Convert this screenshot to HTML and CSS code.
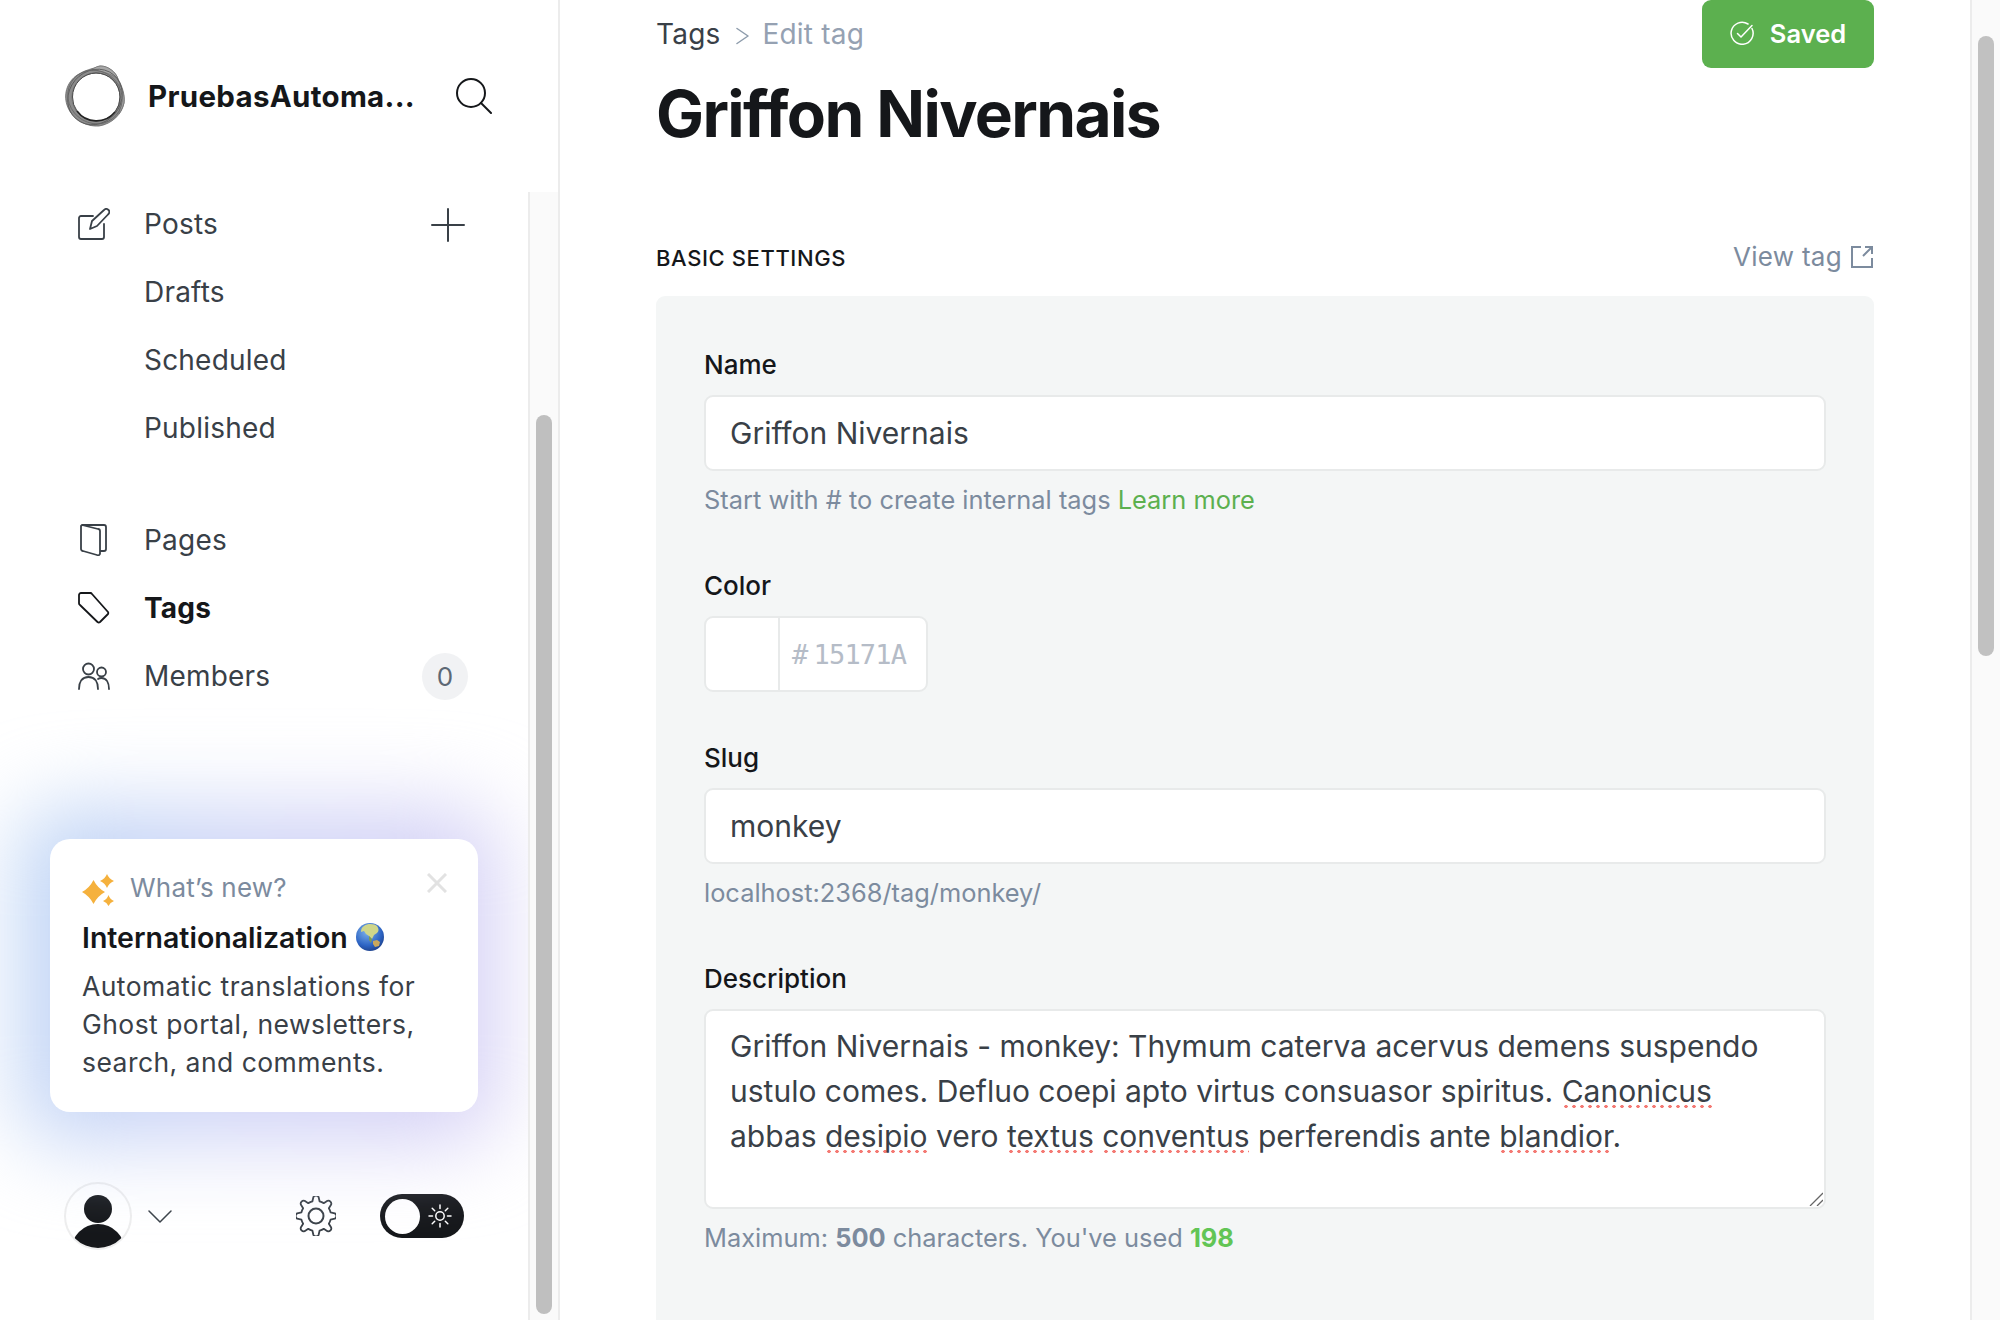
FILE: index.html
```html
<!DOCTYPE html>
<html lang="en">
<head>
<meta charset="utf-8">
<title>Griffon Nivernais - Edit tag</title>
<link rel="stylesheet" href="styles.css">
</head>
<body>
<div class="app">
  <aside class="sidebar">
    <header class="brand">
      <svg class="logo" viewBox="0 0 60 60" fill="none">
        <path fill-rule="evenodd" fill="#8c8c8c" stroke="#666" stroke-width=".8" d="M35 0C43 0 51 6 53 13C57 20 60 28 59 37C57 48 47 58 34 60C20 61 6 52 2 39C-2 27 3 14 14 8C20 4 27 3 35 0ZM7 31a24 24 0 1 0 48 0a24 24 0 1 0-48 0Z"/>
        <path fill="#a8a8a8" stroke="#777" stroke-width=".8" d="M27 4C30 1 33 0 36 0C43 0 51 6 53 13C50 10 40 5 27 4Z"/>
        <path fill="#a0a0a0" stroke="#777" stroke-width=".8" d="M54 18C57 23 60 29 59 37C58 41 56 45 54 48C56 38 56 28 54 18Z"/>
        <path d="M12 45A24 24 0 0 0 50 46" stroke="#222" stroke-width="1.600"/>
        <path d="M12 45A24 24 0 0 1 7.500 31A24 24 0 0 1 31 7A24 24 0 0 1 55 31A24 24 0 0 1 50 46" stroke="#4a4a4a" stroke-width="1"/>
        <ellipse cx="30" cy="31" rx="26" ry="29" stroke="#555" stroke-width=".8" transform="rotate(40 30 31)"/>
        <ellipse cx="30" cy="31" rx="26" ry="28" stroke="#666" stroke-width=".8" transform="rotate(-50 30 31)"/>
      </svg>
      <span class="brand-name">PruebasAutoma...</span>
      <svg class="search" viewBox="0 0 36 36" fill="none" stroke="#15171a" stroke-width="2" stroke-linecap="round"><circle cx="15" cy="15" r="14"/><path d="M25 25l10 10"/></svg>
    </header>
    <div class="side-body">
      <div class="side-col">
        <nav class="nav">
          <div class="nav-group">
            <a class="nav-row">
              <svg class="nav-icon" viewBox="0 0 32 32" fill="none" stroke="#394047" stroke-width="1.8" stroke-linecap="round" stroke-linejoin="round"><path d="M15 8H3a2 2 0 0 0-2 2v19a2 2 0 0 0 2 2h21a2 2 0 0 0 2-2V16"/><path d="M12 21l2-8L26 2c1.500-1.500 3-1.500 4.500 0s1 3-.5 4.500L19 18z"/></svg>
              <span>Posts</span>
              <svg class="plus" viewBox="0 0 34 34" fill="none" stroke="#394047" stroke-width="2" stroke-linecap="round"><path d="M17 1v32M1 17h32"/></svg>
            </a>
            <a class="nav-row sub">Drafts</a>
            <a class="nav-row sub">Scheduled</a>
            <a class="nav-row sub">Published</a>
          </div>
          <div class="nav-group">
            <a class="nav-row">
              <svg class="nav-icon" viewBox="0 0 32 32" fill="none" stroke="#394047" stroke-width="1.8" stroke-linejoin="round"><path d="M4 1h22a2 2 0 0 1 2 2v22a2 2 0 0 1-2 2h-4"/><path d="M4 1l16 4a2 2 0 0 1 2 2v22a2 2 0 0 1-3 2L5 27a2 2 0 0 1-2-2V2z"/></svg>
              <span>Pages</span>
            </a>
            <a class="nav-row active">
              <svg class="nav-icon" viewBox="0 0 32 32" fill="none" stroke="#15171a" stroke-width="1.8" stroke-linejoin="round"><path d="M3 1h9a2 2 0 0 1 2 1l16 18a2 2 0 0 1 0 2l-8 8a2 2 0 0 1-2.500 0L2 13a2 2 0 0 1-1-2V3a2 2 0 0 1 2-2z"/></svg>
              <span>Tags</span>
            </a>
            <a class="nav-row">
              <svg class="nav-icon" viewBox="0 0 32 32" fill="none" stroke="#394047" stroke-width="1.8" stroke-linecap="round"><circle cx="10.500" cy="9" r="5.500"/><circle cx="23.500" cy="12" r="4.500"/><path d="M1 29c0-7 3-12 9.500-12S20 22 20 29"/><path d="M20 19c1-.7 2.300-1 3.500-1 5 0 7.500 5 7.500 11"/></svg>
              <span>Members</span>
              <span class="badge">0</span>
            </a>
          </div>
        </nav>
        <section class="news">
          <svg class="news-close" viewBox="0 0 20 20" fill="none" stroke="#e2e2e2" stroke-width="3"><path d="M1 1l18 18M19 1L1 19"/></svg>
          <div class="news-kicker">
            <svg class="sparkle" viewBox="0 0 32 32" fill="#f5b13d"><path d="M11.500 6Q15.500 14 23 18 15.500 22 11.500 30 7.500 22 0 18 7.500 14 11.500 6Z"/><path d="M25 0Q27 5 32 7 27 9 25 14 23 9 18 7 23 5 25 0Z"/><path d="M26.500 21Q28 25.500 32 27 28 28.500 26.500 32 25 28.500 21 27 25 25.500 26.500 21Z"/></svg>
            <span>What’s new?</span>
          </div>
          <h3 class="news-title">Internationalization
            <svg class="globe" viewBox="0 0 28 28"><defs><radialGradient id="sea" cx=".4" cy=".3" r=".85"><stop offset="0" stop-color="#7fb4ec"/><stop offset=".6" stop-color="#2d64c4"/><stop offset="1" stop-color="#16306f"/></radialGradient></defs><circle cx="14" cy="14" r="14" fill="url(#sea)"/><path d="M8 3c4-3 11-2 13 0 2 3 2 5 0 7l-3 2-2 4-3-3-3-2-2-3-3 1c0-3 1-5 3-6z" fill="#cfd68a"/><path d="M17 18l4-1 3 2-1 4-4 1-2-3z" fill="#c9a85c"/><path d="M13 13l3 3-1 4-2-3z" fill="#7c9c55"/></svg>
          </h3>
          <p class="news-text">Automatic translations for Ghost portal, newsletters, search, and comments.</p>
        </section>
        <footer class="side-foot">
          <div class="avatar">
            <svg viewBox="0 0 64 64"><circle cx="32" cy="25" r="14" fill="#15171a"/><circle cx="32" cy="67" r="27" fill="#15171a"/></svg>
          </div>
          <svg class="chev" viewBox="0 0 24 14" fill="none" stroke="#394047" stroke-width="1.500" stroke-linecap="round" stroke-linejoin="round"><path d="M1 1l11 11L23 1"/></svg>
          <svg class="gear" viewBox="0 0 40 40" fill="none" stroke="#394047" stroke-width="1.800" stroke-linejoin="round"><path d="M16.370 5.450L17.360 1.180A3 3 0 0 1 22.640 1.180L23.630 5.450A15 15 0 0 1 27.730 7.140L31.430 4.820A3 3 0 0 1 35.180 8.570L32.860 12.270A15 15 0 0 1 34.550 16.370L38.820 17.360A3 3 0 0 1 38.820 22.640L34.550 23.630A15 15 0 0 1 32.860 27.730L35.180 31.430A3 3 0 0 1 31.430 35.180L27.730 32.860A15 15 0 0 1 23.630 34.550L22.640 38.820A3 3 0 0 1 17.360 38.820L16.370 34.550A15 15 0 0 1 12.270 32.860L8.570 35.180A3 3 0 0 1 4.820 31.430L7.140 27.730A15 15 0 0 1 5.450 23.630L1.180 22.640A3 3 0 0 1 1.180 17.360L5.450 16.370A15 15 0 0 1 7.140 12.270L4.820 8.570A3 3 0 0 1 8.570 4.820L12.270 7.140A15 15 0 0 1 16.370 5.450Z"/><circle cx="20" cy="20" r="7.500" stroke-width="2"/></svg>
          <div class="toggle">
            <span class="knob"></span>
            <svg class="sun" viewBox="0 0 24 24" fill="none" stroke="#fff" stroke-width="1.500" stroke-linecap="round"><circle cx="12" cy="12" r="4.200"/><path d="M12 1v3.500M12 19.500V23M1 12h3.500M19.500 12H23M4.200 4.200l2.500 2.500M17.300 17.300l2.500 2.500M4.200 19.800l2.500-2.500M17.300 6.700l2.500-2.500"/></svg>
          </div>
        </footer>
      </div>
      <div class="side-track"><div class="side-thumb"></div></div>
    </div>
  </aside>

  <main class="main">
    <div class="topbar">
      <div class="crumbs">
        <a class="crumb-link">Tags</a>
        <svg class="crumb-sep" viewBox="0 0 13 18" fill="none" stroke="#8e9cac" stroke-width="1.500" stroke-linecap="round" stroke-linejoin="round"><path d="M1 1.500l11 7.500-11 7.500"/></svg>
        <span class="crumb-here">Edit tag</span>
      </div>
      <button class="saved" type="button">
        <svg viewBox="0 0 24 24" fill="none" stroke="#fff" stroke-width="1.500" stroke-linecap="round" stroke-linejoin="round"><path d="M22 7.500A11 11 0 1 1 18 3"/><path d="M7.500 12.500l3.500 3.500 11-11.500"/></svg>
        Saved
      </button>
    </div>
    <h1 class="title">Griffon Nivernais</h1>
    <div class="section-head">
      <h2>BASIC SETTINGS</h2>
      <a class="view-tag">View tag
        <svg viewBox="0 0 22 22" fill="none" stroke="#7c8b9e" stroke-width="2"><path d="M10 1H1v20h20v-9"/><path d="M12 10l9-9M14 1h7v7"/></svg>
      </a>
    </div>
    <form class="panel">
      <div class="field field-name">
        <label>Name</label>
        <div class="input">Griffon Nivernais</div>
        <p class="hint">Start with # to create internal tags <a class="green">Learn more</a></p>
      </div>
      <div class="field field-color">
        <label>Color</label>
        <div class="color">
          <span class="swatch"></span>
          <span class="hex"><span class="hash">#</span>15171A</span>
        </div>
      </div>
      <div class="field field-slug">
        <label>Slug</label>
        <div class="input">monkey</div>
        <p class="hint">localhost:2368/tag/monkey/</p>
      </div>
      <div class="field field-desc">
        <label>Description</label>
        <div class="textarea">Griffon Nivernais - monkey: Thymum caterva acervus demens suspendo ustulo comes. Defluo coepi apto virtus consuasor spiritus. <span class="spell">Canonicus</span> abbas <span class="spell">desipio</span> vero <span class="spell">textus</span> <span class="spell">conventus</span> perferendis ante <span class="spell">blandior</span>.
          <svg class="grip" viewBox="0 0 14 14" fill="none" stroke="#666" stroke-width="1.300"><path d="M1 14L14 1M8 14l6-6"/></svg>
        </div>
        <p class="hint">Maximum: <b>500</b> characters. You've used <b class="green">198</b></p>
      </div>
    </form>
  </main>

  <div class="page-track"><div class="page-thumb"></div></div>
</div>
</body>
</html>
```
FILE: styles.css
```css
* { box-sizing: border-box; }
html, body { margin: 0; height: 100%; overflow: hidden; background: #fff; }
body { font-family: Inter, "Liberation Sans", sans-serif; color: #15171a; }
h1, h2, h3, p { margin: 0; }

.app { display: flex; width: 2000px; height: 1320px; overflow: hidden; }

/* Sidebar */
.sidebar { flex: 0 0 560px; height: 1320px; border-right: 2px solid #ececec; display: flex; flex-direction: column; }
.brand { flex: 0 0 190px; display: flex; align-items: center; padding-left: 65px; }
.logo { width: 60px; height: 60px; flex: none; margin-top: 1px; overflow: visible; }
.brand-name { margin-left: 23px; width: 308px; font-size: 29.500px; font-weight: 700; letter-spacing: .3px; white-space: nowrap; margin-top: 2px; }
.search { width: 36px; height: 36px; flex: none; margin-top: 1px; }

.side-body { flex: 1; display: flex; min-height: 0; }
.side-col { flex: 1; min-width: 0; overflow: hidden; display: flex; flex-direction: column; }
.side-track { flex: 0 0 30px; margin-top: 2px; background: #fafafa; border-left: 2px solid #ececec; padding: 223px 0 6px 6px; }
.side-thumb { width: 16px; height: 100%; background: #bfbfbf; border-radius: 8px; }

.nav-group + .nav-group { margin-top: 44px; }
.nav-row { display: flex; align-items: center; height: 68px; padding-left: 144px; position: relative; font-size: 28px; letter-spacing: .2px; color: #394047; }
.nav-row.active { color: #15171a; font-weight: 700; }
.nav-icon { position: absolute; left: 78px; top: 18px; width: 32px; height: 32px; }
.plus { position: absolute; left: 431px; top: 18px; width: 34px; height: 34px; }
.badge { position: absolute; left: 422px; top: 11px; width: 46px; height: 47px; border-radius: 50%; background: #f1f2f4; color: #5d6875; font-size: 26px; display: flex; align-items: center; justify-content: center; }

.news { position: relative; margin: 129px 0 0 50px; width: 428px; height: 273px; padding: 28px 32px 0; background: #fff; border-radius: 20px; z-index: 1; }
.news::before { content: ""; position: absolute; z-index: -2; inset: -30px -20px -30px -30px; border-radius: 40px; background: linear-gradient(100deg, #b9d3f5 0%, #cfd4f6 45%, #d6cff5 100%); filter: blur(42px); }
.news::after { content: ""; position: absolute; z-index: -1; inset: 0; border-radius: 20px; background: #fff; }
.news-close { position: absolute; left: 377px; top: 34px; width: 20px; height: 20px; }
.news-kicker { display: flex; align-items: center; gap: 16px; height: 40px; font-size: 26px; color: #7c8b9e; letter-spacing: .2px; }
.sparkle { width: 32px; height: 32px; flex: none; margin-top: 5px; }
.news-title { display: flex; align-items: center; gap: 8px; margin-top: 8px; height: 44px; font-size: 28.500px; font-weight: 600; letter-spacing: 0; white-space: nowrap; }
.globe { width: 28px; height: 28px; flex: none; }
.news-text { margin-top: 8px; font-size: 26.500px; line-height: 38px; letter-spacing: .45px; color: #394047; }

.side-foot { position: relative; height: 90px; margin-top: 59px; display: flex; align-items: center; padding-left: 64px; }
.avatar { width: 68px; height: 68px; border-radius: 50%; border: 2px solid #eeeeee; overflow: hidden; flex: none; background: #fff; }
.avatar svg { display: block; width: 100%; height: 100%; }
.chev { width: 24px; height: 14px; margin-left: 16px; margin-top: 2px; flex: none; }
.gear { width: 40px; height: 40px; margin-left: 124px; flex: none; }
.toggle { width: 84px; height: 44px; margin-left: 44px; flex: none; border-radius: 22px; background: #15171a; display: flex; align-items: center; padding-left: 5px; }
.knob { width: 35px; height: 35px; border-radius: 50%; background: #fff; flex: none; }
.sun { width: 24px; height: 24px; margin-left: 8px; flex: none; }

/* Main */
.main { flex: 0 0 1410px; padding: 0 96px; min-width: 0; height: 1320px; overflow: hidden; }
.topbar { display: flex; justify-content: space-between; height: 68px; }
.crumbs { display: flex; align-items: center; font-size: 28px; letter-spacing: .2px; height: 68px; }
.crumb-link { color: #394047; }
.crumb-sep { width: 13px; height: 18px; margin: 3px 14px 0 15px; }
.crumb-here { color: #95a1b2; }
.saved { display: flex; align-items: center; justify-content: center; gap: 16px; width: 172px; height: 68px; padding: 0 0 2px; border: 0; border-radius: 9px; background: #5cb04f; color: #fff; font: 600 25.500px Inter, sans-serif; }
.saved svg { width: 24px; height: 24px; }
.title { margin-top: 11px; height: 70px; font-size: 64px; line-height: 70px; font-weight: 700; letter-spacing: -1.600px; }
.section-head { display: flex; justify-content: space-between; align-items: center; margin-top: 93px; height: 32px; }
.section-head h2 { font-size: 22px; font-weight: 500; letter-spacing: .6px; }
.view-tag { display: flex; align-items: center; gap: 9px; margin: -3px 1px 0 0; font-size: 26px; letter-spacing: .3px; color: #7c8b9e; }
.view-tag svg { width: 22px; height: 22px; }

.panel { margin-top: 22px; height: 1100px; padding: 49px 48px 0; background: #f4f6f6; border-radius: 9px 9px 0 0; }
.field label { display: block; height: 40px; line-height: 40px; font-size: 26px; font-weight: 500; color: #15171a; }
.input { height: 76px; margin-top: 10px; padding: 0 24px; display: flex; align-items: center; background: #fff; border: 2px solid #e8eaea; border-radius: 9px; font-size: 30px; letter-spacing: 0; color: #394047; }
.hint { margin-top: 13px; font-size: 25.400px; line-height: 32px; letter-spacing: 0; color: #7c8b9e; }
.green { color: #5cb04f; }
b { font-weight: 700; }
.hint b.green { color: #62c555; }
.field-color { margin-top: 50px; }
.field-slug { margin-top: 46px; }
.field-desc { margin-top: 50px; }
.color { display: flex; width: 224px; height: 76px; margin-top: 10px; background: #fff; border: 2px solid #e8eaea; border-radius: 9px; }
.swatch { width: 74px; border-right: 2px solid #e8eaea; }
.hex { flex: 1; display: flex; align-items: center; padding-left: 12px; font: 27px "DejaVu Sans Mono", "Liberation Mono", monospace; letter-spacing: -.8px; color: #b5bcc7; }
.hash { margin-right: 6px; }
.textarea { position: relative; height: 200px; margin-top: 10px; padding: 13px 24px 0; background: #fff; border: 2px solid #e8eaea; border-radius: 9px; font-size: 30px; line-height: 45px; letter-spacing: 0; color: #394047; }
.spell { background: radial-gradient(circle, #f47a74 1.500px, transparent 1.900px) 0 100% / 8px 5px repeat-x; }
.grip { position: absolute; right: 1px; bottom: 1px; width: 14px; height: 14px; }

/* Page scrollbar */
.page-track { flex: 0 0 30px; height: 1320px; background: #fafafa; border-left: 2px solid #ececec; padding: 36px 0 0 6px; }
.page-thumb { width: 16px; height: 620px; border-radius: 8px; background: #c1c1c1; }
```
